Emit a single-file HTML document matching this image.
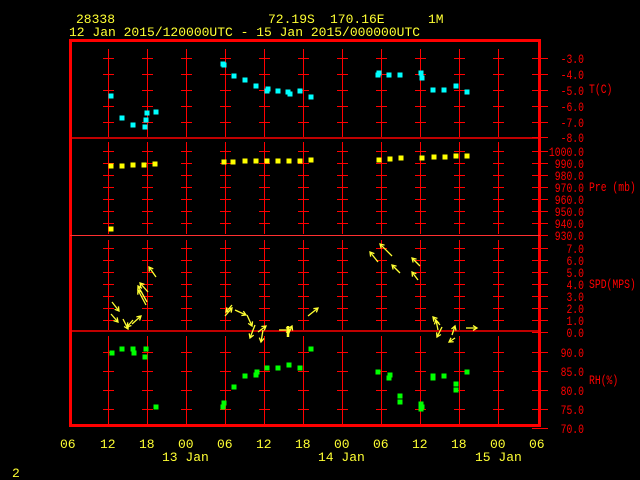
<!DOCTYPE html>
<html><head><meta charset="utf-8"><style>
html,body{margin:0;padding:0;background:#000;width:640px;height:480px;overflow:hidden}
svg{display:block}
text{font-family:"Liberation Mono",monospace;font-size:13px}
</style></head><body>
<svg id="s" width="640" height="480" viewBox="0 0 640 480" xmlns="http://www.w3.org/2000/svg">
<g fill="#ffff33">
<text x="76" y="23">28338</text>
<text x="268" y="23">72.19S</text>
<text x="330" y="23">170.16E</text>
<text x="428" y="23">1M</text>
<text x="69" y="36">12 Jan 2015/120000UTC - 15 Jan 2015/000000UTC</text>
<text x="60" y="448">06</text><text x="100" y="448">12</text><text x="139" y="448">18</text>
<text x="178" y="448">00</text><text x="217" y="448">06</text><text x="256" y="448">12</text>
<text x="295" y="448">18</text><text x="334" y="448">00</text><text x="373" y="448">06</text>
<text x="412" y="448">12</text><text x="451" y="448">18</text><text x="490" y="448">00</text>
<text x="529" y="448">06</text>
<text x="162" y="461">13 Jan</text><text x="318" y="461">14 Jan</text><text x="475" y="461">15 Jan</text>
<text x="12" y="477">2</text>
</g>
<g id="grid" stroke="#ff0000" stroke-width="1" shape-rendering="crispEdges"></g>
<rect x="70.5" y="40.5" width="469" height="385" fill="none" stroke="#ff0000" stroke-width="3"/>
<g stroke="#ff0000" stroke-width="1.5">
<line x1="70" y1="138" x2="540" y2="138"/>
<line x1="70" y1="235.5" x2="540" y2="235.5" stroke="#ff3030" stroke-width="1"/>
<line x1="70" y1="331" x2="540" y2="331"/>
</g>
<g id="lab" fill="#ff0000"></g>
<g fill="#ff0000">
<text transform="translate(589,93) scale(0.75,1)">T(C)</text>
<text transform="translate(589,191) scale(0.75,1)">Pre (mb)</text>
<text transform="translate(589,288) scale(0.75,1)">SPD(MPS)</text>
<text transform="translate(589,384) scale(0.75,1)">RH(%)</text>
</g>
<g id="pts"></g>
<g id="wind" stroke="#ffff33" stroke-width="1.3" fill="none"></g>
</svg>
<script>
var NS="http://www.w3.org/2000/svg";
function el(p,t,a,txt){var e=document.createElementNS(NS,t);for(var k in a)e.setAttribute(k,a[k]);if(txt)e.textContent=txt;document.getElementById(p).appendChild(e);}
var xs=[108,147,186,225,264,303,342,381,420,459,498];
var panels=[[49,137,[58,74,90,106,122]],[142,234,[151,163,175,187,199,211,223]],[240,330,[248,260,272,284,296,308,320]],[336,424,[352,371,390,409]]];
panels.forEach(function(p){xs.forEach(function(x){
 el("grid","line",{x1:x+0.5,y1:p[0],x2:x+0.5,y2:p[1]});
 p[2].forEach(function(y){el("grid","line",{x1:x-5,y1:y+0.5,x2:x+6,y2:y+0.5});});
});});
var labs=[["-3.0",58],["-4.0",74],["-5.0",90],["-6.0",106],["-7.0",122],["-8.0",137],
["1000.0",151],["990.0",163],["980.0",175],["970.0",187],["960.0",199],["950.0",211],["940.0",223],["930.0",235],
["7.0",248],["6.0",260],["5.0",272],["4.0",284],["3.0",296],["2.0",308],["1.0",320],["0.0",332],
["90.0",352],["85.0",371],["80.0",390],["75.0",409],["70.0",428]];
labs.forEach(function(l){
 el("grid","line",{x1:532,y1:l[1]+0.5,x2:548,y2:l[1]+0.5});
 el("lab","text",{transform:"translate(584,"+(l[1]+5)+") scale(0.75,1)","text-anchor":"end"},l[0]);
});
function pts(arr,c,s){arr.forEach(function(p){el("pts","rect",{x:p[0]-s/2,y:p[1]-s/2,width:s,height:s,fill:c});});}
pts([[111,96],[122,118],[133,125],[145,127],[146,120],[147,113],[156,112],[223,64],[224,65],[234,76],[245,80],[256,86],[267,91],[268,89],[278,91],[288,92],[290,94],[300,91],[311,97],[378,75],[379,73],[389,75],[400,75],[421,73],[422,78],[433,90],[444,90],[456,86],[467,92]],"#00ffff",5);
pts([[111,166],[122,166],[133,165],[144,165],[155,164],[224,162],[233,162],[245,161],[256,161],[267,161],[278,161],[289,161],[300,161],[311,160],[379,160],[390,159],[401,158],[422,158],[434,157],[445,157],[456,156],[467,156],[111,229]],"#ffff00",5);
pts([[112,353],[122,349],[133,349],[134,353],[146,349],[145,357],[156,407],[223,407],[224,403],[234,387],[245,376],[256,375],[257,372],[267,368],[278,368],[289,365],[300,368],[311,349],[378,372],[389,378],[390,375],[400,396],[400,402],[421,404],[422,407],[421,409],[433,376],[433,378],[444,376],[456,384],[456,390],[467,372]],"#00ff00",5);
var w=[[112,302,119,311],[111,314,118,322],[123,319,128,329],[133,320,127,327],[132,324,141,316],[147,302,138,286],[146,305,138,290],[148,292,140,283],[156,277,149,267],[232,305,226,312],[225,316,232,308],[235,310,246,315],[247,315,252,326],[255,325,250,338],[258,332,266,326],[263,330,261,342],[279,330,290,330],[288,335,292,326],[308,316,318,308],[392,256,380,244],[378,262,370,252],[400,273,392,265],[420,266,412,258],[418,280,412,272],[440,325,433,317],[438,330,436,320],[442,327,437,337],[452,335,455,326],[455,338,449,342],[466,328,477,328]];
w.forEach(function(a){
 el("wind","line",{x1:a[0],y1:a[1],x2:a[2],y2:a[3]});
 var dx=a[2]-a[0],dy=a[3]-a[1],L=Math.sqrt(dx*dx+dy*dy),ux=dx/L,uy=dy/L,h=4;
 var p1=[a[2]-h*ux-h*0.6*uy,a[3]-h*uy+h*0.6*ux],p2=[a[2]-h*ux+h*0.6*uy,a[3]-h*uy-h*0.6*ux];
 el("wind","polyline",{points:p1.join(",")+" "+a[2]+","+a[3]+" "+p2.join(",")});
});
el("wind","line",{x1:288,y1:326,x2:288,y2:337,"stroke-width":2.5});
</script>
</body></html>
